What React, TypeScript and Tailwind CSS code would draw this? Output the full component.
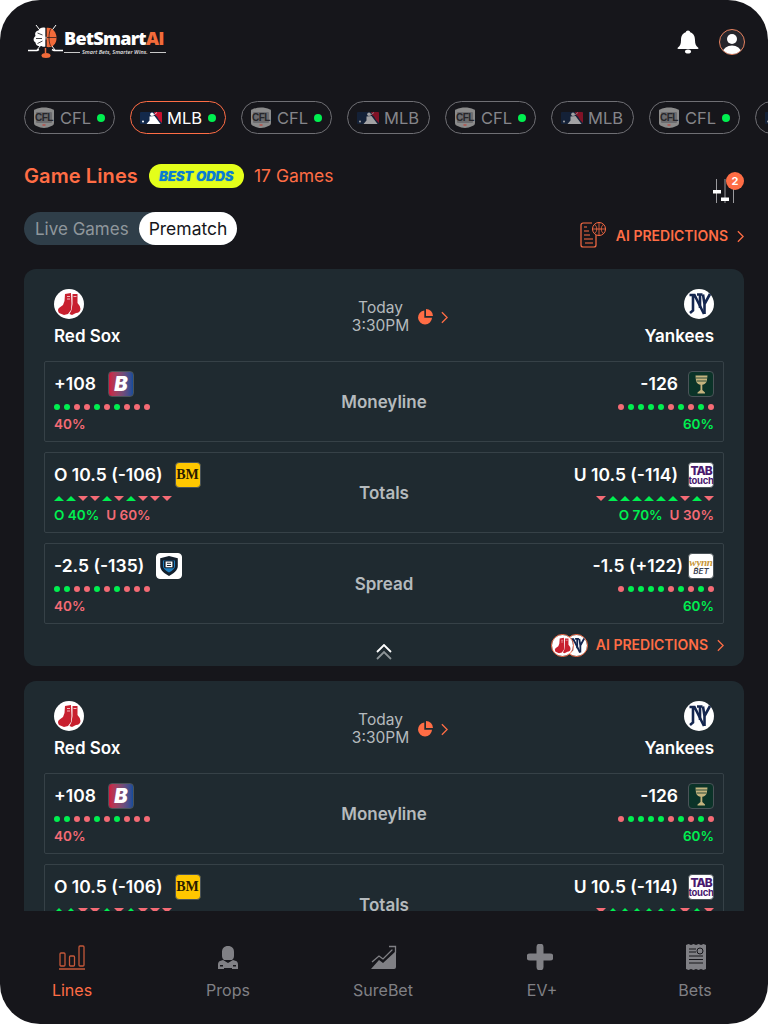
import React from "react";

const ORANGE = "#ff6d45";

function CflBadge() {
  return (
    <span className="relative flex h-[21px] w-[20px] shrink-0 items-center justify-center">
      <svg width="20" height="21" viewBox="0 0 20 21" className="absolute left-0 top-0">
        <path d="M1 2.500C4 1 7 .5 10 .5s6 .5 9 2c.5 0 1 .5 1 1V16c0 1.500-1 2.500-2.500 3-2.500 1-5 2-7.500 2s-5-1-7.500-2C1 18.500 0 17.500 0 16V3.500c0-.5.5-1 1-1z" fill="#8b8b8b" />
        <rect x="2" y="5" width="16" height="11" rx="1" fill="#6c6c6f" />
        <rect x="8.500" y="17.500" width="3" height="1" fill="#c8362c" />
      </svg>
      <span className="relative font-['Liberation_Sans'] text-[10px] font-bold leading-none tracking-[-0.5px] text-[#26262a]">CFL</span>
    </span>
  );
}

function MlbLogo() {
  return (
    <svg width="22" height="12" viewBox="0 0 22 12" className="shrink-0">
      <rect width="22" height="12" rx="1" fill="#13294b" />
      <path d="M14 0h7a1 1 0 0 1 1 1v10l-3-3-2-3.500-1.500-1z" fill="#c8102e" />
      <circle cx="12" cy="2.300" r="1.800" fill="#fff" />
      <path d="M9.500 4.500l5-.5 3 4 3 4H6.500l3-3.500z" fill="#fff" />
      <path d="M13 3.500L17 .5" stroke="#fff" strokeWidth=".7" />
      <circle cx="3" cy="9.500" r="1" fill="#fff" />
    </svg>
  );
}

function Chip({ kind, active, dot }: { kind: "CFL" | "MLB"; active?: boolean; dot?: boolean }) {
  return (
    <div className={`flex h-[33px] shrink-0 items-center rounded-full border pl-[9px] ${kind === "CFL" ? "w-[91px]" : dot ? "w-[96px]" : "w-[83px]"} ${active ? "border-[#ff6d45]" : "border-[#6f6f74]"}`}>
      <span className={active || kind === "CFL" ? "flex" : "flex opacity-60"}>
        {kind === "CFL" ? <CflBadge /> : <MlbLogo />}
      </span>
      <span className={`${kind === "CFL" ? "ml-[6px]" : "ml-[5px]"} text-[16.500px] leading-[20px] ${active ? "text-white" : "text-[#85858a]"}`}>{kind}</span>
      {dot && <span className="ml-[6px] h-[8px] w-[8px] rounded-full bg-[#00f050]" />}
    </div>
  );
}

function Chevron({ size = 8, h = 14 }: { size?: number; h?: number }) {
  return (
    <svg width={size} height={h} viewBox="0 0 8 14" fill="none" stroke={ORANGE} strokeWidth="1.500" className="shrink-0">
      <path d="M1 1l6 6-6 6" />
    </svg>
  );
}

function Logo() {
  return (
    <div className="flex h-[33px] items-start">
      <svg width="36" height="34" viewBox="0 0 36 34" className="shrink-0">
        <path d="M8 0l19 25M28 0L9 25" stroke="#fff" strokeWidth="1" />
        <path d="M0 25.500h9l2-1M35 25.500h-9l-2-1" stroke="#fff" strokeWidth="1.500" fill="none" />
        <path d="M17.500 3c-3-1-6 0-7 2.500-3 .5-4 3-3 5.500-2.500 2-2.500 5 0 6.500 0 2.500 3 4.500 6 3.500 1.500 1 3 1 4 .5z" fill="#fff" />
        <path d="M18.500 3c5.500-1 10 4 10 10s-4 10-10 9z" fill="#f26b3a" />
        <path d="M18 3v19M19 12.500h9.500M22.500 4c-2 5-2 12 0 17" stroke="#16161b" strokeWidth=".7" fill="none" />
        <path d="M9.500 8l5 2M8 13.500l6 0M9.500 18.500l5-2.500" stroke="#16161b" strokeWidth=".8" />
        <ellipse cx="18" cy="30.500" rx="4.500" ry="2.500" fill="#f26b3a" />
        <path d="M17.500 23v5" stroke="#f26b3a" strokeWidth="1.500" />
      </svg>
      <div className="flex flex-col pt-[3px]">
        <div className="font-['Open_Sans'] text-[18px] font-extrabold leading-[21px] tracking-[-0.75px] text-white">
          BetSmart<span className="text-[#f26b3a]">AI</span>
        </div>
        <div className="flex items-center gap-[2px]">
          <span className="h-[1px] w-[16px] bg-[#c9c9c9]" />
          <span className="whitespace-nowrap font-['Open_Sans'] text-[5.500px] font-semibold italic leading-[7px] text-[#e5e5e5]">Smart Bets, Smarter Wins.</span>
          <span className="h-[1px] w-[16px] bg-[#c9c9c9]" />
        </div>
      </div>
    </div>
  );
}

function Bell() {
  return (
    <svg width="22" height="24" viewBox="0 0 22 24" fill="#fff">
      <path d="M11 .5C9.800.5 9 1.300 8.800 2.300 5.300 3.300 4 6.500 4 10c0 4-1 6-3 7.500-.9.7-.6 1.500.5 1.500h19c1.100 0 1.400-.8.500-1.500-2-1.500-3-3.500-3-7.500 0-3.500-1.300-6.700-4.800-7.700C13 1.300 12.200.5 11 .5z" />
      <ellipse cx="11" cy="21.500" rx="3" ry="2" />
    </svg>
  );
}

function UserIcon() {
  return (
    <span className="block h-[26px] w-[26px] overflow-hidden rounded-full border border-[#e8825f] bg-[#26262c]">
      <svg width="24" height="24" viewBox="0 0 24 24" fill="#fff">
        <circle cx="12" cy="9" r="5" />
        <ellipse cx="12" cy="22" rx="9" ry="6.500" />
      </svg>
    </span>
  );
}

function FilterIcon() {
  return (
    <div className="relative h-[24px] w-[22px]">
      <svg width="22" height="24" viewBox="0 0 22 24" fill="none">
        <path d="M3.500 0v24M12 0v24M20.500 0v24" stroke="#9a9a9e" strokeWidth="1" />
        <rect x="0" y="11" width="8" height="3.500" fill="#fff" />
        <rect x="8" y="18.500" width="8" height="3.500" fill="#fff" />
      </svg>
      <span className="absolute left-[13px] top-[-7px] flex h-[18px] w-[18px] items-center justify-center rounded-full bg-[#ff6d45] text-[11px] font-bold leading-none text-white">2</span>
    </div>
  );
}

function AiDocIcon() {
  return (
    <svg width="26" height="26" viewBox="0 0 26 26" fill="none" stroke={ORANGE} strokeWidth="1" className="shrink-0">
      <path d="M12 1H3a2 2 0 0 0-2 2v20a2 2 0 0 0 2 2h11a2 2 0 0 0 2-2V13" strokeWidth="1.200" />
      <path d="M4 5h3M4 9h5M4 13h6M4 17h9M5 21h8" strokeWidth="1.200" />
      <circle cx="19" cy="7" r="6.500" fill="#16161b" />
      <path d="M12.500 7h13M19 .5v13M14.500 2.500c3 2 3 7 0 9M23.500 2.500c-3 2-3 7 0 9" strokeWidth=".8" />
    </svg>
  );
}

function RedSox({ size = 30 }: { size?: number }) {
  return (
    <span className="block shrink-0 rounded-full bg-white" style={{ width: size, height: size }}>
      <svg width={size} height={size} viewBox="0 0 30 30" fill="#c8202f">
        <path d="M11 5L17 4L17.500 15L17 21L14 25L10 26L5 24Q3 21 5 19L9 16L10.500 12Z" />
        <path d="M18.500 5L23.500 5L23.500 14Q26.500 17 26.500 20Q26 24 22 24L18 26L15.500 25L17.500 21L18.500 15Z" />
        <path d="M13 7.500h3M19.500 7.500h3M13 10h3" stroke="#fff" strokeWidth=".7" />
      </svg>
    </span>
  );
}

function Yankees({ size = 30 }: { size?: number }) {
  return (
    <span className="block shrink-0 rounded-full bg-white" style={{ width: size, height: size }}>
      <svg width={size} height={size} viewBox="0 0 30 30" fill="none" stroke="#14264f" strokeWidth="2.600">
        <path d="M5.500 6h5L20 25M9 6v15.500l-3 2.500" />
        <path d="M13 5.500h5.500M16 5.500V19" />
        <path d="M19 5.500l1.500 9.500M26 5L20.500 15v10" />
      </svg>
    </span>
  );
}

function Dots({ p, align }: { p: string; align?: "right" }) {
  return (
    <div className={`flex gap-[4px] ${align ? "justify-end" : ""}`}>
      {p.split("").map((c, i) => (
        <span key={i} className={`h-[6px] w-[6px] rounded-full ${c === "g" ? "bg-[#00f050]" : "bg-[#f56b75]"}`} />
      ))}
    </div>
  );
}

function Tris({ p, align }: { p: string; align?: "right" }) {
  return (
    <div className={`flex gap-[2px] ${align ? "justify-end" : ""}`}>
      {p.split("").map((c, i) => (
        <svg key={i} width="10" height="5" viewBox="0 0 10 5">
          <path d={c === "g" ? "M5 0l5 5H0z" : "M0 0h10L5 5z"} fill={c === "g" ? "#00f050" : "#f56b75"} />
        </svg>
      ))}
    </div>
  );
}

function BookBox({ className, children }: { className: string; children?: React.ReactNode }) {
  return <span className={`flex h-[26px] w-[26px] shrink-0 items-center justify-center overflow-hidden rounded-[4px] border border-[#4a5358] ${className}`}>{children}</span>;
}

const B1 = () => <BookBox className="bg-gradient-to-r from-[#d0173f] to-[#0e4b9a]"><span className="text-[20px] font-black italic leading-none text-white">B</span></BookBox>;
const Chalice = () => (
  <BookBox className="bg-[#0b3328]">
    <svg width="13" height="19" viewBox="0 0 13 19" fill="#c4b47e">
      <path d="M.5.500h12l-.7 5.500c-.5 2.500-3 3.500-4.500 3.700V15l2.700 2.500V18.500H2.500v-1L5.500 15V9.700C4 9.500 1.500 8.500 1 6z" />
      <path d="M1 3h11M1.500 6h10" stroke="#0b3328" strokeWidth=".8" />
    </svg>
  </BookBox>
);
const BM = () => <BookBox className="bg-[#ffc700]"><span className="font-['Liberation_Serif'] text-[14px] leading-none text-[#2a1c00]">BM</span></BookBox>;
const Shield = () => (
  <BookBox className="border-white bg-white">
    <svg width="22" height="22" viewBox="0 0 20 20">
      <path d="M10 1l8 2v7c0 4-4 7-8 9-4-2-8-5-8-9V3z" fill="#14202c" />
      <path d="M4.500 5h11v5c0 2-2 4-5.500 6-3.500-2-5.500-4-5.500-6z" fill="#1f7fc0" />
      <rect x="5.500" y="5" width="9" height="7" rx="1" fill="#14202c" />
      <path d="M7.500 6.500h5v4h-5zM7.500 8.500h5" stroke="#fff" strokeWidth="1.200" fill="none" />
    </svg>
  </BookBox>
);
const Tab = () => (
  <BookBox className="flex-col bg-white">
    <span className="text-[12px] font-extrabold leading-[11px] tracking-[-1px] text-[#4a1a70]">TAB</span>
    <span className="text-[9.500px] font-bold leading-[9px] tracking-[-0.3px] text-[#4a1a70]">touch</span>
  </BookBox>
);
const Wynn = () => (
  <BookBox className="flex-col bg-white">
    <span className="font-['Liberation_Serif'] text-[11px] italic leading-[10px] tracking-[-0.3px] text-[#c8973a]">wynn</span>
    <span className="text-[8px] font-semibold italic leading-[8px] text-[#3b4252]">BET</span>
  </BookBox>
);

function Row({
  label, lo, lb, lMark, lFoot, ro, rb, rMark, rFoot, rGap = "gap-[10px]",
}: {
  label: string; lo: string; lb: React.ReactNode; lMark: React.ReactNode; lFoot: React.ReactNode;
  ro: string; rb: React.ReactNode; rMark: React.ReactNode; rFoot: React.ReactNode; rGap?: string;
}) {
  return (
    <div className="grid h-[81px] grid-cols-[1fr_auto_1fr] items-center rounded-[2px] border border-[#364147] px-[9px] pt-[9px]">
      <div className="flex h-full flex-col">
        <div className="flex h-[26px] items-center gap-[12px] text-[17.500px] font-semibold leading-none text-white"><span>{lo}</span>{lb}</div>
        <div className="mt-[6px] flex h-[8px] items-center">{lMark}</div>
        <div className="mt-[3px] text-[13.500px] font-semibold leading-[20px]">{lFoot}</div>
      </div>
      <div className="pb-[6px] text-[17px] font-semibold text-[#b5babd]">{label}</div>
      <div className="flex h-full flex-col items-end">
        <div className={`flex h-[26px] items-center ${rGap} text-[17.500px] font-semibold leading-none text-white`}><span>{ro}</span>{rb}</div>
        <div className="mt-[6px] flex h-[8px] items-center">{rMark}</div>
        <div className="mt-[3px] text-[13.500px] font-semibold leading-[20px]">{rFoot}</div>
      </div>
    </div>
  );
}

function Card() {
  const g = "text-[#00f050]";
  const r = "text-[#f56b75]";
  return (
    <div className="shrink-0 rounded-[12px] bg-[#1f2a30] px-[20px] pt-[20px]">
      <div className="grid grid-cols-[1fr_auto_1fr] px-[10px]">
        <div>
          <RedSox />
          <div className="mt-[7px] text-[17px] font-semibold leading-[20px] text-white">Red Sox</div>
        </div>
        <div className="flex items-center gap-[8px] pb-[1px] pl-[32px]">
          <div className="text-center text-[15.500px] leading-[18px] text-[#b5babd]">Today<br />3:30PM</div>
          <svg width="16" height="16" viewBox="0 0 16 16" fill={ORANGE} className="shrink-0">
            <path d="M7.300 1.500A7 7 0 1 0 15 8.700H7.300z" />
            <path d="M9 0a7 7 0 0 1 7 7H9z" />
          </svg>
          <Chevron size={7} h={13} />
        </div>
        <div className="flex flex-col items-end">
          <Yankees />
          <div className="mt-[7px] text-[17px] font-semibold leading-[20px] text-white">Yankees</div>
        </div>
      </div>
      <div className="mt-[15px] flex flex-col gap-[10px]">
        <Row label="Moneyline" lo="+108" lb={<B1 />} lMark={<Dots p="ggrrgrgrrr" />} lFoot={<span className={r}>40%</span>}
          ro="-126" rb={<Chalice />} rMark={<Dots p="rggggrgrgr" align="right" />} rFoot={<span className={g}>60%</span>} />
        <Row label="Totals" lo="O 10.5 (-106)" lb={<BM />} lMark={<Tris p="ggrrgrgrrr" />}
          lFoot={<span className="flex gap-[7px]"><span className={g}>O 40%</span><span className={r}>U 60%</span></span>}
          ro="U 10.5 (-114)" rb={<Tab />} rMark={<Tris p="rggggggrgr" align="right" />}
          rFoot={<span className="flex gap-[7px]"><span className={g}>O 70%</span><span className={r}>U 30%</span></span>} />
        <Row label="Spread" lo="-2.5 (-135)" lb={<Shield />} lMark={<Dots p="ggrrgrgrrr" />} lFoot={<span className={r}>40%</span>}
          ro="-1.5 (+122)" rb={<Wynn />} rMark={<Dots p="rggggrgrgr" align="right" />} rFoot={<span className={g}>60%</span>} rGap="gap-[5px]" />
      </div>
      <div className="relative flex h-[42px] items-center justify-end">
        <svg width="16" height="17" viewBox="0 0 16 17" fill="none" strokeWidth="1.800" className="absolute left-[332px] top-[20px]">
          <path d="M1 8l7-7 7 7" stroke="#fff" />
          <path d="M1 15l7-7 7 7" stroke="#8e9598" />
        </svg>
        <div className="flex items-center">
          <span className="relative z-10 rounded-full border border-[#ff6d45]"><RedSox size={21} /></span>
          <span className="-ml-[9px] rounded-full border border-[#ff6d45]"><Yankees size={21} /></span>
          <span className="ml-[8px] text-[14px] font-semibold leading-none text-[#ff6d45]">AI PREDICTIONS</span>
          <span className="ml-[9px]"><Chevron size={7} h={13} /></span>
        </div>
      </div>
    </div>
  );
}

function NavItem({ label, active, labelClass = "", children }: { label: string; active?: boolean; labelClass?: string; children: React.ReactNode }) {
  return (
    <div className="flex w-[80px] flex-col items-center">
      <div className="flex h-[26px] items-end justify-center">{children}</div>
      <span className={`mt-[10px] text-[16px] leading-[20px] ${labelClass} ${active ? "text-[#ff6d45]" : "text-[#808085]"}`}>{label}</span>
    </div>
  );
}

export default function App() {
  const chips: { kind: "CFL" | "MLB"; active?: boolean; dot?: boolean }[] = [
    { kind: "CFL", dot: true }, { kind: "MLB", active: true, dot: true }, { kind: "CFL", dot: true }, { kind: "MLB" },
    { kind: "CFL", dot: true }, { kind: "MLB" }, { kind: "CFL", dot: true }, { kind: "MLB" },
  ];
  return (
    <div className="h-[1024px] w-[768px] bg-white font-['Inter',sans-serif]">
      <div className="flex h-full w-full flex-col overflow-hidden rounded-[40px] bg-[#16161b]">
        <div className="h-[911px] shrink-0 overflow-hidden">
          <div className="flex items-start justify-between pl-[28px] pr-[23px] pt-[25px]">
            <Logo />
            <div className="flex items-center gap-[20px] pt-[4px]">
              <Bell />
              <UserIcon />
            </div>
          </div>
          <div className="mt-[43px] flex gap-[15px] overflow-hidden pl-[24px]">
            {chips.map((c, i) => <Chip key={i} {...c} />)}
          </div>
          <div className="mt-[30px] flex h-[24px] items-center pl-[24px] pr-[33px]">
            <span className="text-[20px] font-semibold leading-none tracking-[0.1px] text-[#ff6d45]">Game Lines</span>
            <span className="ml-[11px] flex h-[24px] w-[95px] items-center justify-center rounded-full bg-[#e4ff1a] text-[13px] font-extrabold italic leading-none text-[#0a7bd0] [text-shadow:0_0_1px_#0a7bd0]">BEST ODDS</span>
            <span className="ml-[10px] text-[17.500px] leading-none text-[#ff6d45]">17 Games</span>
            <span className="ml-auto mt-[30px]"><FilterIcon /></span>
          </div>
          <div className="mt-[24px] flex h-[36px] items-start justify-between pl-[24px] pr-[24px]">
            <div className="flex h-[33px] w-[213px] items-center rounded-full bg-[#2f3e49]">
              <span className="flex-1 pl-[11px] pt-[1px] text-[17px] leading-none text-[#8f979c]">Live Games</span>
              <span className="flex h-[33px] w-[98px] items-center justify-center rounded-full bg-white pt-[1px] text-[17.500px] leading-none text-[#16161b]">Prematch</span>
            </div>
            <div className="flex items-center self-end">
              <AiDocIcon />
              <span className="ml-[10px] mt-[2px] text-[14px] font-semibold leading-none text-[#ff6d45]">AI PREDICTIONS</span>
              <span className="ml-[9px] mt-[2px]"><Chevron size={7} h={13} /></span>
            </div>
          </div>
          <div className="mt-[21px] flex flex-col gap-[15px] px-[24px]">
            <Card />
            <Card />
          </div>
        </div>
        <div className="flex flex-1 items-start justify-between px-[32px] pt-[33px]">
          <NavItem label="Lines" active>
            <svg width="26" height="25" viewBox="0 0 26 25" fill="none" stroke="#c4583a" strokeWidth="1.300">
              <rect x="1" y="8" width="5" height="13" rx="1" />
              <rect x="10.500" y="11" width="5" height="10" rx="1" />
              <rect x="20" y="1" width="5" height="20" rx="1" />
              <path d="M0 24h26" />
            </svg>
          </NavItem>
          <NavItem label="Props">
            <svg width="20" height="24" viewBox="0 0 20 24" fill="#808085">
              <path d="M10 0C6 0 4 2.500 4 6v4c0 2 1 3 2 4h8c1-1 2-2 2-4V6c0-3.500-2-6-6-6zM5.500 6h9V5h-9z" />
              <path d="M5 14l5 3 5-3 3 1c1.500.5 2 2 2 4v4h-6v-1h-8v1H0v-4c0-2 .5-3.500 2-4z" />
              <path d="M2 19h3v1.500H2zM15 19h3v1.500h-3z" fill="#16161b" />
            </svg>
          </NavItem>
          <NavItem label="SureBet" labelClass="mr-[2px]">
            <svg width="26" height="25" viewBox="0 0 26 25" fill="none">
              <path d="M1 17l7-6 4 3 9-9v-.5M18 1.500h6.500V8" stroke="#808085" strokeWidth="1.300" />
              <path d="M0 24l8-9 4 3 13-12v16a2 2 0 0 1-2 2z" fill="#808085" />
            </svg>
          </NavItem>
          <NavItem label="EV+" labelClass="ml-[4px]">
            <svg width="26" height="26" viewBox="0 0 26 26" fill="#808085">
              <path d="M9.500 3a3.500 3.500 0 0 1 7 0v6.500H23a3.500 3.500 0 0 1 0 7h-6.500V23a3.500 3.500 0 0 1-7 0v-6.500H3a3.500 3.500 0 0 1 0-7h6.500z" />
            </svg>
          </NavItem>
          <NavItem label="Bets" labelClass="mr-[2px]">
            <svg width="20" height="26" viewBox="0 0 20 26">
              <path d="M0 1l2.500-1L5 1l2.500-1L10 1l2.500-1L15 1l2.500-1L20 1v24l-2.500 1-2.500-1-2.500 1L10 25l-2.500 1L5 25l-2.500 1L0 25z" fill="#808085" />
              <path d="M3 5h7M3 8h7M3 12h14M3 15.500h14M3 19h14" stroke="#16161b" strokeWidth="1.200" />
              <circle cx="14" cy="7" r="3" fill="none" stroke="#16161b" strokeWidth="1" />
            </svg>
          </NavItem>
        </div>
      </div>
    </div>
  );
}
